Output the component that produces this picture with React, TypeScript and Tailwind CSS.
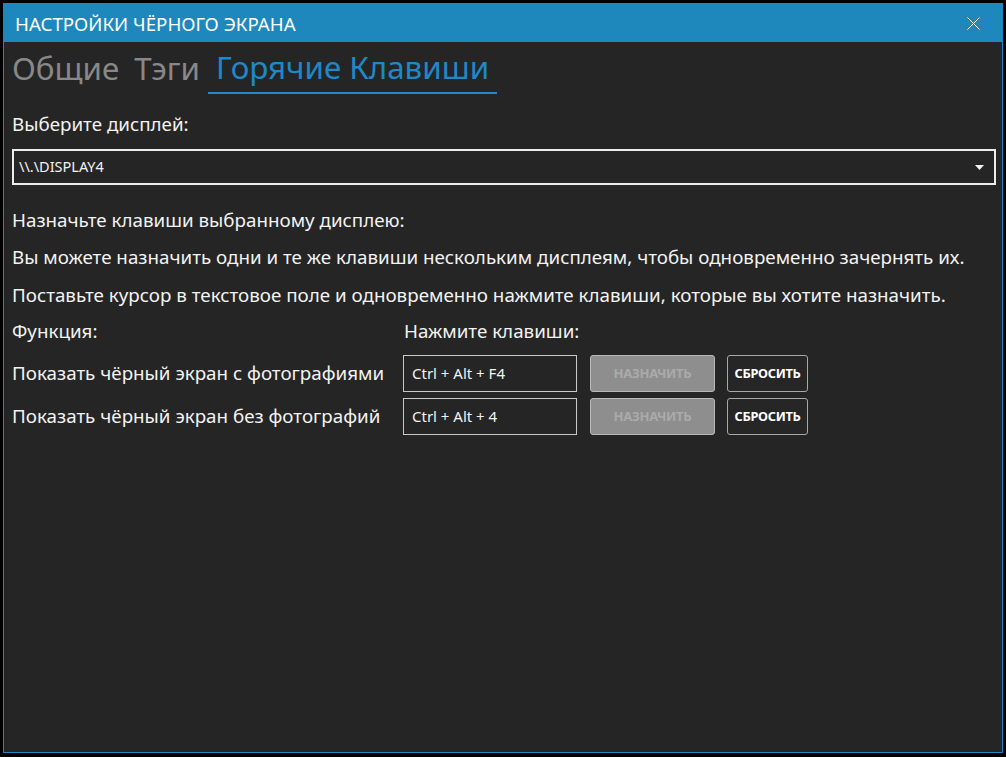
import React from 'react';

const font = { fontFamily: '"Noto Sans", "Open Sans", sans-serif' };

const HotkeyRow = ({ label, keys }: { label: string; keys: string }) => (
    <div className="flex items-center h-[43px]">
        <div className="w-[391px] text-[18.8px] text-[#f2f2f2]">{label}</div>
        <div className="w-[174px] h-[37px] border border-[#c8c8c8] flex items-center pl-[8px] text-[15px] text-[#f2f2f2]">
            {keys}
        </div>
        <button className="ml-[13px] w-[125px] h-[37px] rounded-[3px] border border-[#b9b9b9] bg-[#8e8e8e] text-[13px] font-bold text-[#aaaaaa] tracking-[-0.3px]">
            НАЗНАЧИТЬ
        </button>
        <button className="ml-[12px] w-[81px] h-[37px] rounded-[3px] border border-[#a8a8a8] bg-[#262626] text-[12.8px] font-bold text-white tracking-[-0.3px]">
            СБРОСИТЬ
        </button>
    </div>
);

const App = () => {
    return (
        <div className="w-[1006px] h-[757px] bg-black pt-[3px] pl-[3px]" style={font}>
            <div className="w-[1000px] h-[750px] border border-[#1e88c0] bg-[#252525] flex flex-col">
                {/* Title bar */}
                <div className="h-[38px] bg-[#1e88bd] flex items-center justify-between pl-[11px] pr-[22px]">
                    <span className="text-[18.7px] text-white mt-[3px]">НАСТРОЙКИ ЧЁРНОГО ЭКРАНА</span>
                    <svg width="13" height="13" viewBox="0 0 13 13" className="text-white">
                        <path d="M0.5 0.5 L12.5 12.5 M12.5 0.5 L0.5 12.5" stroke="currentColor" strokeWidth="1" />
                    </svg>
                </div>

                {/* Tabs */}
                <div className="flex h-[52px] pl-[4px]">
                    <div className="px-[4px] text-[31.3px] leading-[52px] text-[#888888]">Общие</div>
                    <div className="pl-[11px] pr-[8px] text-[31.3px] leading-[52px] text-[#888888]">Тэги</div>
                    <div className="px-[8px] text-[31.3px] leading-[50px] text-[#1e88c8] border-b-2 border-[#1e88c8] h-[52px]">
                        Горячие Клавиши
                    </div>
                </div>

                <div className="flex flex-col pl-[8px] pr-[6px]">
                    <div className="mt-[18px] text-[18.8px] leading-[24px] text-[#f2f2f2]">Выберите дисплей:</div>

                    {/* Display select */}
                    <div className="mt-[13px] h-[36px] border-2 border-[#ececec] flex items-center justify-between pl-[5px] pr-[10px]">
                        <span className="text-[14.5px] text-[#f2f2f2]">\\.\DISPLAY4</span>
                        <svg width="9" height="5" viewBox="0 0 9 5">
                            <path d="M0 0 L9 0 L4.5 5 Z" fill="#f2f2f2" />
                        </svg>
                    </div>

                    <div className="mt-[23px] text-[18.8px] leading-[24px] text-[#f2f2f2]">
                        Назначьте клавиши выбранному дисплею:
                    </div>
                    <div className="mt-[13px] text-[18.8px] leading-[24px] text-[#f2f2f2]">
                        Вы можете назначить одни и те же клавиши нескольким дисплеям, чтобы одновременно зачернять их.
                    </div>
                    <div className="mt-[14px] text-[18.8px] leading-[24px] text-[#f2f2f2]">
                        Поставьте курсор в текстовое поле и одновременно нажмите клавиши, которые вы хотите назначить.
                    </div>

                    <div className="mt-[12px] flex text-[18.8px] leading-[24px] text-[#f2f2f2]">
                        <div className="w-[392px]">Функция:</div>
                        <div>Нажмите клавиши:</div>
                    </div>

                    <div className="mt-[9px] flex flex-col">
                        <HotkeyRow label="Показать чёрный экран с фотографиями" keys="Ctrl + Alt + F4" />
                        <HotkeyRow label="Показать чёрный экран без фотографий" keys="Ctrl + Alt + 4" />
                    </div>
                </div>
            </div>
        </div>
    );
};

export default App;
